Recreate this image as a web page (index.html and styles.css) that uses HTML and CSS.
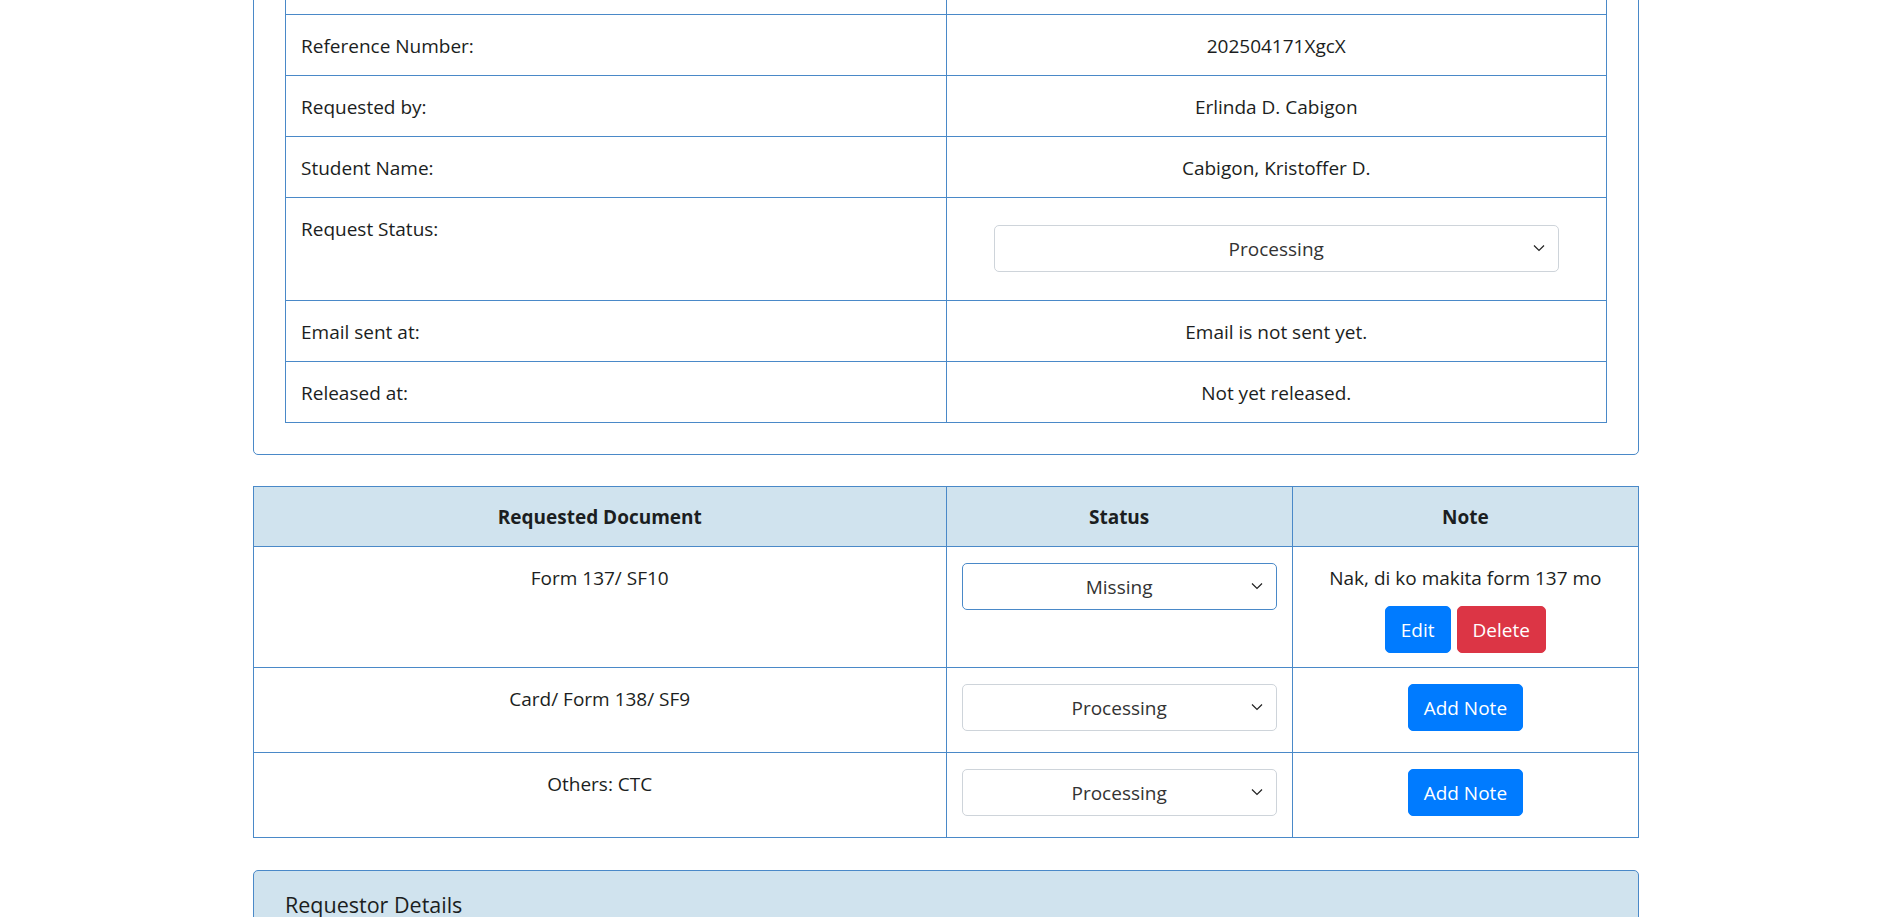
FILE: index.html
```html
<!DOCTYPE html>
<html lang="en">
<head>
<meta charset="utf-8">
<title>Request Details</title>
<link rel="stylesheet" href="styles.css">
</head>
<body>
<div class="container">
  <div class="card">
    <table class="info-table">
      <tr><td>&nbsp;</td><td class="val">&nbsp;</td></tr>
      <tr><td>Reference Number:</td><td class="val">202504171XgcX</td></tr>
      <tr><td>Requested by:</td><td class="val">Erlinda D. Cabigon</td></tr>
      <tr><td>Student Name:</td><td class="val">Cabigon, Kristoffer D.</td></tr>
      <tr>
        <td>Request Status:</td>
        <td class="val">
          <div class="select-wrap status-select">
            <select class="form-select"><option>Processing</option><option>Ready for pickup</option><option>Released</option></select>
            <svg class="chev" width="12" height="8" viewBox="0 0 12 8"><path d="M1 1.5 L6 6.5 L11 1.5" fill="none" stroke="#222" stroke-width="1.2"/></svg>
          </div>
        </td>
      </tr>
      <tr><td>Email sent at:</td><td class="val">Email is not sent yet.</td></tr>
      <tr><td>Released at:</td><td class="val">Not yet released.</td></tr>
    </table>
  </div>

  <table class="doc-table">
    <thead>
      <tr><th class="c-doc">Requested Document</th><th class="c-status">Status</th><th class="c-note">Note</th></tr>
    </thead>
    <tbody>
      <tr>
        <td>Form 137/ SF10</td>
        <td>
          <div class="select-wrap">
            <select class="form-select focused"><option>Missing</option><option>Processing</option></select>
            <svg class="chev" width="12" height="8" viewBox="0 0 12 8"><path d="M1 1.5 L6 6.5 L11 1.5" fill="none" stroke="#222" stroke-width="1.2"/></svg>
          </div>
        </td>
        <td>
          <div class="note-text">Nak, di ko makita form 137 mo</div>
          <div class="btn-row"><button class="btn btn-primary">Edit</button><button class="btn btn-danger">Delete</button></div>
        </td>
      </tr>
      <tr>
        <td>Card/ Form 138/ SF9</td>
        <td>
          <div class="select-wrap">
            <select class="form-select"><option>Processing</option><option>Missing</option></select>
            <svg class="chev" width="12" height="8" viewBox="0 0 12 8"><path d="M1 1.5 L6 6.5 L11 1.5" fill="none" stroke="#222" stroke-width="1.2"/></svg>
          </div>
        </td>
        <td><button class="btn btn-primary">Add Note</button></td>
      </tr>
      <tr>
        <td>Others: CTC</td>
        <td>
          <div class="select-wrap">
            <select class="form-select"><option>Processing</option><option>Missing</option></select>
            <svg class="chev" width="12" height="8" viewBox="0 0 12 8"><path d="M1 1.5 L6 6.5 L11 1.5" fill="none" stroke="#222" stroke-width="1.2"/></svg>
          </div>
        </td>
        <td><button class="btn btn-primary">Add Note</button></td>
      </tr>
    </tbody>
  </table>

  <div class="card requestor">
    <div class="card-header"><h5 class="card-title">Requestor Details</h5></div>
  </div>
</div>
</body>
</html>
```

FILE: styles.css
```css
* { box-sizing: border-box; }

body {
  margin: 0;
  font-family: "Open Sans", "Noto Sans", sans-serif;
  font-size: 19px;
  line-height: 30px;
  color: #1b1e21;
  background: #fff;
}

.container {
  width: 1386px;
  margin: -79px auto 0;
}

.card {
  border: 1px solid #4a89c8;
  border-radius: 5px;
  padding: 31px;
  margin-bottom: 31px;
}

table {
  width: 100%;
  border-collapse: collapse;
}

.info-table td {
  width: 50%;
  border: 1px solid #4a89c8;
  padding: 16px 15px 14px;
  vertical-align: top;
  text-align: left;
}

.info-table td.val { text-align: center; }

.select-wrap {
  position: relative;
}

.status-select {
  width: 565px;
  margin: 11px auto 14px;
}

.form-select {
  display: block;
  width: 100%;
  height: 47px;
  padding: 7px 15px;
  font: inherit;
  color: #333;
  background: #fff;
  border: 1px solid #ced4da;
  border-radius: 5px;
  appearance: none;
  -webkit-appearance: none;
  text-align: center;
  text-align-last: center;
}

.form-select.focused { border-color: #4a89c8; }

.chev {
  position: absolute;
  right: 14px;
  top: 19px;
  pointer-events: none;
}

.doc-table {
  margin-bottom: 32px;
}

.doc-table th,
.doc-table td {
  border: 1px solid #4a89c8;
  padding: 16px 15px 14px;
  vertical-align: top;
  text-align: center;
}

.doc-table th {
  background: #d0e3ee;
  font-weight: 700;
  padding: 15px 15px 14px;
}

.doc-table .c-doc { width: 50%; }
.doc-table .c-status { width: 25%; }
.doc-table .c-note { width: 25%; }

.doc-table tbody .select-wrap { margin-bottom: 7px; }

.note-text { margin-bottom: 13px; }

.btn-row {
  display: flex;
  justify-content: center;
  gap: 6px;
}

.btn {
  display: inline-block;
  height: 47px;
  padding: 7px 15px;
  font: inherit;
  color: #fff;
  border: 1px solid transparent;
  border-radius: 5px;
  cursor: pointer;
}

.btn-primary { background: #007bff; border-color: #007bff; }
.btn-danger { background: #dc3545; border-color: #dc3545; }

.requestor {
  padding: 0;
  background: #d0e3ee;
}

.card-header {
  padding: 19px 31px 16px;
}

.card-title {
  margin: 0;
  font-size: 21.5px;
  font-weight: 400;
  line-height: 30px;
}
```
